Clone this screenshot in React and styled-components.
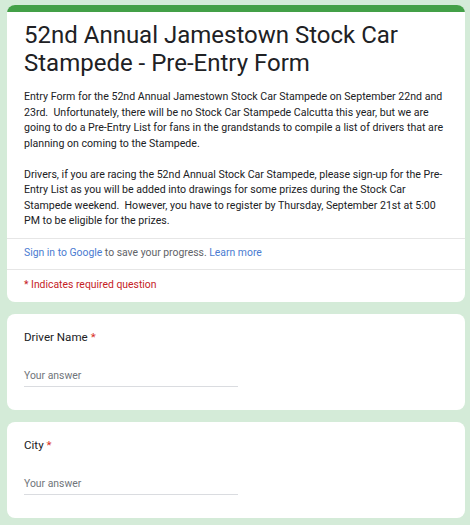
import React from "react";
import styled, { createGlobalStyle } from "styled-components";

const GlobalStyle = createGlobalStyle`
  html, body {
    margin: 0;
    padding: 0;
    background: #d4ebd8;
    font-family: Roboto, "Liberation Sans", Arial, sans-serif;
    color: #202124;
  }
`;

const Page = styled.div`
  display: flex;
  flex-direction: column;
  gap: 12px;
  padding: 5px 5px 8px 7px;
`;

const Card = styled.section`
  background: #fff;
  border-radius: 8px;
  overflow: hidden;
  display: flex;
  flex-direction: column;
`;

const TopBar = styled.div`
  height: 7px;
  background: #43a047;
`;

const Header = styled.div`
  padding: 9px 12px 9px 17px;
`;

const Title = styled.h1`
  margin: 0;
  font-size: 24px;
  line-height: 28px;
  font-weight: 400;
  color: #202124;
`;

const Description = styled.div`
  margin-top: 12px;
  font-size: 10.6px;
  line-height: 15.5px;
  white-space: pre-wrap;
  color: #202124;
`;

const Divider = styled.div`
  height: 1px;
  background: #e6e6e6;
`;

const InfoRow = styled.div`
  padding: ${p => (p.required ? "7px 17px 9px" : "6px 17px 8px")};
  font-size: 10.4px;
  line-height: 16px;
  color: ${p => (p.required ? "#c5221f" : "#5f6368")};
`;

const Link = styled.a`
  color: #4a7bd1;
  text-decoration: none;
`;

const Question = styled.div`
  padding: 15px 17px 23px 17px;
  display: flex;
  flex-direction: column;
`;

const Label = styled.div`
  font-size: 11.6px;
  line-height: 17px;
  color: #202124;
`;

const Star = styled.span`
  color: #d93025;
`;

const Answer = styled.div`
  margin-top: 22px;
  width: 214px;
  padding-bottom: 2px;
  border-bottom: 1px solid #dadce0;
  font-size: 10.4px;
  line-height: 16px;
  color: #70757a;
`;

// line breaks follow the form's own wrapping at this width
const description = [
  "Entry Form for the 52nd Annual Jamestown Stock Car Stampede on September 22nd and",
  "23rd.  Unfortunately, there will be no Stock Car Stampede Calcutta this year, but we are",
  "going to do a Pre-Entry List for fans in the grandstands to compile a list of drivers that are",
  "planning on coming to the Stampede.",
  "",
  "Drivers, if you are racing the 52nd Annual Stock Car Stampede, please sign-up for the Pre-",
  "Entry List as you will be added into drawings for some prizes during the Stock Car",
  "Stampede weekend.  However, you have to register by Thursday, September 21st at 5:00",
  "PM to be eligible for the prizes.",
].join("\n");

const questions = ["Driver Name", "City"];

export default function App() {
  return (
    <>
      <GlobalStyle />
      <Page>
        <Card>
          <TopBar />
          <Header>
            <Title>52nd Annual Jamestown Stock Car Stampede - Pre-Entry Form</Title>
            <Description>{description}</Description>
          </Header>
          <Divider />
          <InfoRow>
            <Link href="#">Sign in to Google</Link> to save your progress.{" "}
            <Link href="#">Learn more</Link>
          </InfoRow>
          <Divider />
          <InfoRow required>* Indicates required question</InfoRow>
        </Card>
        {questions.map(q => (
          <Card key={q}>
            <Question>
              <Label>
                {q} <Star>*</Star>
              </Label>
              <Answer>Your answer</Answer>
            </Question>
          </Card>
        ))}
      </Page>
    </>
  );
}
